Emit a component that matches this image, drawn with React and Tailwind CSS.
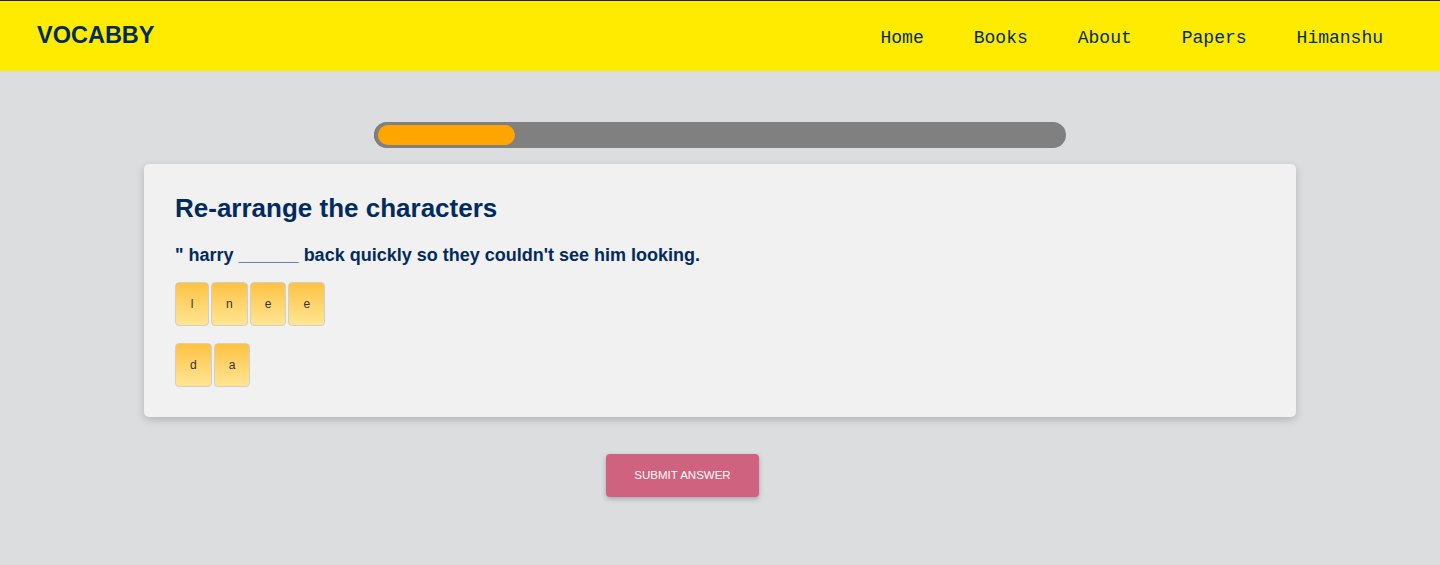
import React from "react";

const links = ["Home", "Books", "About", "Papers", "Himanshu"];
const rows = [["l", "n", "e", "e"], ["d", "a"]];
const progress = 20;

const Tile = ({ ch }) => (
  <button className="h-[44px] min-w-[34px] px-[14px] rounded-[4px] border border-[#cfcfcf] bg-gradient-to-b from-[#ffc23e] to-[#ffe692] text-[12px] text-[#333] font-['Liberation_Sans',Arial,sans-serif]">
    {ch}
  </button>
);

export default function App() {
  return (
    <div className="min-h-[565px] bg-[#dcdddf] border-t border-[#222] font-['Liberation_Sans',Arial,sans-serif]">
      <header className="h-[70px] bg-[#ffeb00] flex items-center justify-between pl-[37px] pr-[32px]">
        <div className="text-[23.5px] font-bold text-[#012b5d]">VOCABBY</div>
        <nav className="flex pt-[4px]">
          {links.map((l) => (
            <a key={l} href="#" className="px-[25px] text-[18px] text-[#012b5d] font-['Liberation_Mono','Courier_New',monospace]">
              {l}
            </a>
          ))}
        </nav>
      </header>

      <main className="flex flex-col items-center pt-[51px]">
        <div className="w-[692px] h-[26px] rounded-full bg-[#808080] p-[3px] border-l border-[#6f6f6f]">
          <div className="h-full rounded-full bg-[#ffa500]" style={{ width: `${progress}%` }} />
        </div>

        <section className="mt-[16px] w-[1152px] bg-[#f1f1f1] rounded-[5px] shadow-[0_3px_8px_rgba(0,0,0,0.18)] px-[31px] pt-[29px] pb-[30px]">
          <h1 className="text-[26px] font-bold text-[#012b5d] leading-[30px]">Re-arrange the characters</h1>
          <p className="mt-[22px] text-[18px] font-bold text-[#012b5d] leading-[20px]">
            " harry ______ back quickly so they couldn't see him looking.
          </p>
          <div className="mt-[17px] flex flex-col gap-[17px]">
            {rows.map((r, i) => (
              <div key={i} className="flex gap-[2px]">
                {r.map((c, j) => (
                  <Tile key={j} ch={c} />
                ))}
              </div>
            ))}
          </div>
        </section>

        <div className="mt-[37px] flex justify-center w-full">
          <button className="mr-[75px] w-[153px] h-[43px] rounded-[4px] bg-[#cf627e] text-white text-[11.5px] shadow-[0_2px_5px_rgba(0,0,0,0.25)]">
            SUBMIT ANSWER
          </button>
        </div>
      </main>
    </div>
  );
}
